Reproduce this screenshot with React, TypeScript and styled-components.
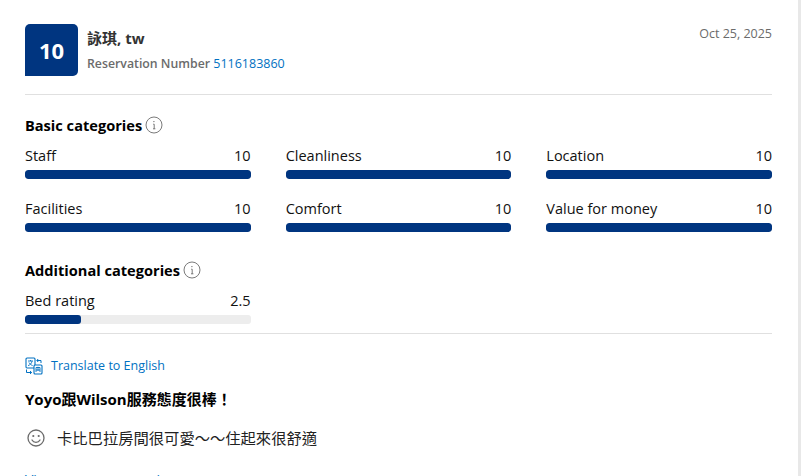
import React from 'react';
import styled, { createGlobalStyle } from 'styled-components';

const Global = createGlobalStyle`
  html, body {
    margin: 0;
    padding: 0;
    height: 476px;
    overflow: hidden;
    background: #fff;
  }
`;

const Page = styled.div`
  width: 801px;
  height: 476px;
  box-sizing: border-box;
  border-right: 3px solid #e8e8e8;
  padding: 24px 26px 0 25px;
  overflow: hidden;
  font-family: "Open Sans", "Noto Sans CJK TC", sans-serif;
  color: #111;
`;

const Header = styled.header`
  display: flex;
  align-items: flex-start;
  gap: 9px;
  height: 70px;
  border-bottom: 1px solid #e0e0e0;
`;

const ScoreBadge = styled.div`
  width: 53px;
  height: 52px;
  display: flex;
  align-items: center;
  justify-content: center;
  background: #003580;
  color: #fff;
  font-size: 22px;
  font-weight: 700;
  border-radius: 5px 5px 5px 0;
`;

const Guest = styled.div`
  flex: 1;
  padding-top: 4px;
`;

const GuestName = styled.div`
  font-size: 15px;
  line-height: 20px;
  font-weight: 700;
  color: #333;
`;

const Reservation = styled.div`
  margin-top: 7px;
  font-size: 12.3px;
  line-height: 18px;
  font-weight: 600;
  color: #6b6b6b;
`;

const ReservationId = styled.a`
  color: #0071c2;
  font-size: 12.5px;
  font-weight: 400;
`;

const DateText = styled.div`
  font-size: 12.5px;
  line-height: 20px;
  color: #6b6b6b;
`;

const SectionTitle = styled.h3<{ $top: number }>`
  display: flex;
  align-items: center;
  gap: 3px;
  margin: ${p => p.$top}px 0 0;
  font-size: 14.6px;
  line-height: 20px;
  font-weight: 700;
  color: #000;
`;

const Grid = styled.div`
  display: grid;
  grid-template-columns: repeat(3, 1fr);
  column-gap: 35px;
  row-gap: 19px;
  margin-top: 10px;
`;

const Item = styled.div`
  display: flex;
  flex-direction: column;
`;

const ItemHead = styled.div`
  display: flex;
  justify-content: space-between;
  font-size: 14.5px;
  line-height: 21px;
  color: #111;
`;

const Track = styled.div`
  height: 9px;
  margin-top: 4px;
  border-radius: 3px;
  background: #ededed;
  overflow: hidden;
`;

const Fill = styled.div`
  height: 100%;
  background: #003580;
  border-radius: 3px;
`;

const Divider = styled.hr`
  margin: 9px 0 0;
  border: 0;
  border-top: 1px solid #e0e0e0;
`;

const TranslateRow = styled.a`
  display: flex;
  align-items: center;
  gap: 8px;
  margin-top: 22px;
  font-size: 12.5px;
  line-height: 20px;
  color: #0071c2;
`;

const ReviewTitle = styled.div`
  margin-top: 13px;
  font-size: 15px;
  line-height: 20px;
  font-weight: 700;
  color: #000;
`;

const ReviewBody = styled.div`
  display: flex;
  align-items: center;
  gap: 12px;
  margin-top: 18px;
  padding-left: 2px;
  font-size: 15.3px;
  line-height: 22px;
  color: #222;
`;

const MoreLink = styled.a`
  display: block;
  margin-top: 21px;
  font-size: 14px;
  line-height: 20px;
  color: #0071c2;
`;

const InfoIcon = () => (
  <svg width="18" height="18" viewBox="0 0 18 18" fill="none" stroke="#6b6b6b">
    <circle cx="9" cy="9" r="8" strokeWidth="0.9" />
    <path d="M8.2 8.2h1v4.6M8 12.8h2.4" strokeWidth="0.9" />
    <circle cx="8.9" cy="5.6" r="0.7" fill="#6b6b6b" stroke="none" />
  </svg>
);

const TranslateIcon = () => (
  <svg width="18" height="18" viewBox="0 0 18 18" fill="none" stroke="#0071c2" strokeWidth="1.1">
    <rect x="1" y="1" width="9" height="10" rx="1" />
    <rect x="9" y="8" width="8" height="9" rx="1" fill="#fff" />
    <path d="M3 4h5M5.5 3v1M7 4.2C6.6 6.4 5 8 3 8.6M4 5.5c.6 1.4 2 2.5 3.6 3" strokeWidth="0.9" />
    <path d="M11 15v-4.5h4V15M11 13h4M13 9.8v4" strokeWidth="0.9" />
    <path d="M12 3.5h4V6M13.2 2l-1.400 1.500 1.400 1.500M1.500 12.500v3h5M5 14l1.600 1.500L5 17" strokeWidth="1" />
  </svg>
);

const SmileIcon = () => (
  <svg width="18" height="18" viewBox="0 0 18 18" fill="none" stroke="#6b6b6b" strokeWidth="1.3">
    <circle cx="9" cy="9" r="8" />
    <circle cx="6.3" cy="7" r="1.1" fill="#6b6b6b" stroke="none" />
    <circle cx="11.7" cy="7" r="1.1" fill="#6b6b6b" stroke="none" />
    <path d="M5 11c.8 1.500 2.200 2.300 4 2.300s3.200-.8 4-2.300" strokeLinecap="round" />
  </svg>
);

type Score = [string, string, number];

const basic: Score[] = [
  ['Staff', '10', 100],
  ['Cleanliness', '10', 100],
  ['Location', '10', 100],
  ['Facilities', '10', 100],
  ['Comfort', '10', 100],
  ['Value for money', '10', 100],
];

const additional: Score[] = [['Bed rating', '2.5', 25]];

const ScoreCell = ({ label, value, pct }: { label: string; value: string; pct: number }) => (
  <Item>
    <ItemHead>
      <span>{label}</span>
      <span>{value}</span>
    </ItemHead>
    <Track>
      <Fill style={{ width: `${pct}%` }} />
    </Track>
  </Item>
);

export default function App() {
  return (
    <Page>
      <Global />
      <Header>
        <ScoreBadge>10</ScoreBadge>
        <Guest>
          <GuestName>詠琪, tw</GuestName>
          <Reservation>
            Reservation Number <ReservationId>5116183860</ReservationId>
          </Reservation>
        </Guest>
        <DateText>Oct 25, 2025</DateText>
      </Header>
      <SectionTitle $top={20}>
        Basic categories <InfoIcon />
      </SectionTitle>
      <Grid>
        {basic.map(([label, value, pct]) => (
          <ScoreCell key={label} label={label} value={value} pct={pct} />
        ))}
      </Grid>
      <SectionTitle $top={28}>
        Additional categories <InfoIcon />
      </SectionTitle>
      <Grid>
        {additional.map(([label, value, pct]) => (
          <ScoreCell key={label} label={label} value={value} pct={pct} />
        ))}
      </Grid>
      <Divider />
      <TranslateRow>
        <TranslateIcon />
        Translate to English
      </TranslateRow>
      <ReviewTitle>Yoyo跟Wilson服務態度很棒！</ReviewTitle>
      <ReviewBody>
        <SmileIcon />
        卡比巴拉房間很可愛～～住起來很舒適
      </ReviewBody>
      <MoreLink>View your response in</MoreLink>
    </Page>
  );
}
